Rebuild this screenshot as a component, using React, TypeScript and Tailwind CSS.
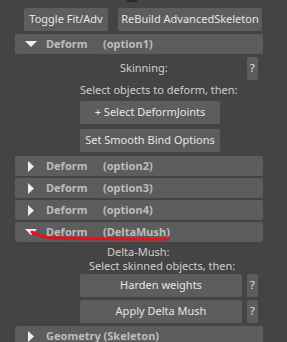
export default function App() {
  const Header = ({ label, sub, open }: { label: string; sub?: string; open?: boolean }) => (
    <div className="ml-[15px] flex h-[20px] w-[248px] items-center whitespace-nowrap rounded-[2px] bg-[#5d5d5d] text-[11px] font-bold text-[#bdbdbd]">
      <div className="flex w-[31px] justify-center pl-[1px]">
        {open ? (
          <svg width="12" height="6" viewBox="0 0 12 6">
            <polygon points="0,0 12,0 6,6" fill="#eeeeee" />
          </svg>
        ) : (
          <svg width="6" height="11" viewBox="0 0 6 11">
            <polygon points="0,0 6,5.5 0,11" fill="#eeeeee" />
          </svg>
        )}
      </div>
      <span className={sub ? 'w-[57px]' : ''}>{label}</span>
      {sub && <span>{sub}</span>}
    </div>
  );

  const Btn = ({ children, w }: { children: React.ReactNode; w: string }) => (
    <div className={`flex h-[23px] shrink-0 items-center justify-center whitespace-nowrap rounded-[2px] bg-[#5d5d5d] text-[11px] text-[#e6e6e6] ${w}`}>
      {children}
    </div>
  );

  const Help = () => (
    <div className="flex h-[23px] w-[11px] shrink-0 items-center justify-center rounded-[2px] bg-[#5d5d5d] text-[11px] text-[#e6e6e6]">
      ?
    </div>
  );

  return (
    <div
      className="relative h-[342px] w-[287px] overflow-hidden bg-[#444444]"
      style={{ fontFamily: '"Noto Sans", "Open Sans", sans-serif' }}
    >
      <div className="absolute left-[127px] top-0 h-[2px] w-[10px] bg-[#2a2a2a]" />

      {/* top buttons */}
      <div className="flex gap-[10px] pl-[24px] pt-[8px]">
        <Btn w="w-[84px]">Toggle Fit/Adv</Btn>
        <Btn w="w-[144px]">ReBuild AdvancedSkeleton</Btn>
      </div>

      <div className="mt-[3px]">
        <Header label="Deform" sub="(option1)" open />
      </div>

      {/* skinning */}
      <div className="mt-[3px] flex h-[23px] items-center">
        <span className="ml-[120px] text-[11px] text-[#cfcfcf]">Skinning:</span>
        <div className="ml-auto mr-[29px]">
          <Help />
        </div>
      </div>
      <div className="flex h-[21px] items-center pl-[80px] text-[11px] text-[#cfcfcf]">
        Select objects to deform, then:
      </div>
      <div className="flex flex-col gap-[5px] pl-[80px]">
        <Btn w="w-[140px]">+ Select DeformJoints</Btn>
        <Btn w="w-[140px]">Set Smooth Bind Options</Btn>
      </div>

      <div className="mt-[4px] flex flex-col gap-[2px]">
        <Header label="Deform" sub="(option2)" />
        <Header label="Deform" sub="(option3)" />
        <Header label="Deform" sub="(option4)" />
        <Header label="Deform" sub="(DeltaMush)" open />
      </div>

      {/* delta mush */}
      <div className="flex h-[17px] items-end pl-[107px] text-[11px] leading-[14px] text-[#cfcfcf]">Delta-Mush:</div>
      <div className="flex h-[14px] items-center pl-[89px] text-[11px] text-[#cfcfcf]">
        Select skinned objects, then:
      </div>
      <div className="mt-[1px] flex flex-col gap-[3px] pl-[80px]">
        <div className="flex gap-[5px]">
          <Btn w="w-[162px]">Harden weights</Btn>
          <Help />
        </div>
        <div className="flex gap-[5px]">
          <Btn w="w-[162px]">Apply Delta Mush</Btn>
          <Help />
        </div>
      </div>

      <div className="mt-[3px]">
        <Header label="Geometry (Skeleton)" />
      </div>

      {/* red hand-drawn underline */}
      <svg className="pointer-events-none absolute left-0 top-0" width="287" height="342">
        <path
          d="M32,232 Q40,238 60,238.5 L164,239.5 Q168,239.5 168,238"
          stroke="#e3121c"
          strokeWidth="3"
          fill="none"
          strokeLinecap="round"
        />
      </svg>
    </div>
  );
}
